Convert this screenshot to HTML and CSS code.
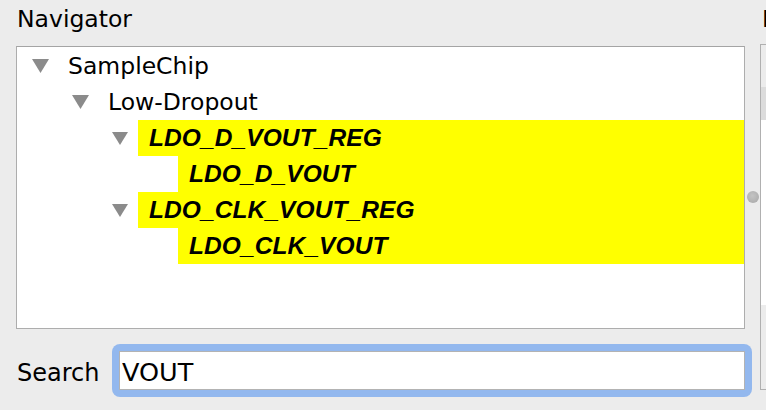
FILE: index.html
```html
<!DOCTYPE html>
<html>
<head>
<meta charset="utf-8">
<title>Navigator</title>
<link rel="stylesheet" href="styles.css">
</head>
<body>
<div class="app">
  <div class="left">
    <div class="title">Navigator</div>
    <div class="tree">
      <div class="row lvl0">
        <span class="tw"><svg width="17" height="14" viewBox="0 0 17 14"><polygon points="0,0 17,0 8.5,14" fill="#8b8b8b"/></svg></span>
        <span class="label">SampleChip</span>
      </div>
      <div class="row lvl1">
        <span class="tw"><svg width="17" height="14" viewBox="0 0 17 14"><polygon points="0,0 17,0 8.5,14" fill="#8b8b8b"/></svg></span>
        <span class="label">Low-Dropout</span>
      </div>
      <div class="row lvl2">
        <span class="tw"><svg width="16" height="13" viewBox="0 0 16 13"><polygon points="0,0 16,0 8,13" fill="#8b8b8b"/></svg></span>
        <span class="label hit">LDO_D_VOUT_REG</span>
      </div>
      <div class="row lvl3">
        <span class="tw"></span>
        <span class="label hit">LDO_D_VOUT</span>
      </div>
      <div class="row lvl2">
        <span class="tw"><svg width="16" height="13" viewBox="0 0 16 13"><polygon points="0,0 16,0 8,13" fill="#8b8b8b"/></svg></span>
        <span class="label hit">LDO_CLK_VOUT_REG</span>
      </div>
      <div class="row lvl3">
        <span class="tw"></span>
        <span class="label hit">LDO_CLK_VOUT</span>
      </div>
    </div>
    <div class="search">
      <label class="search-label" for="q">Search</label>
      <div class="focus-ring">
        <input id="q" class="search-input" type="text" value="VOUT">
      </div>
    </div>
  </div>
  <div class="splitter"><span class="knob"></span></div>
  <div class="right">
    <div class="title rtitle">Details</div>
    <div class="panel">
      <div class="panel-top"></div>
      <div class="panel-head"></div>
      <div class="panel-body"></div>
      <div class="panel-foot"></div>
    </div>
  </div>
</div>
</body>
</html>
```

FILE: styles.css
```css
html, body {
  margin: 0;
  padding: 0;
  background: #ececec;
  overflow: hidden;
  width: 766px;
  height: 410px;
}

.app {
  display: flex;
  align-items: flex-start;
  padding-left: 16px;
  height: 410px;
  font-family: "DejaVu Sans", sans-serif;
  color: #000;
}

.left {
  width: 729px;
  flex: none;
  display: flex;
  flex-direction: column;
}

.title {
  height: 46px;
  box-sizing: border-box;
  padding: 5px 0 0 1px;
  font-size: 23.5px;
  line-height: 28px;
  white-space: nowrap;
}

.tree {
  height: 283px;
  box-sizing: border-box;
  border: 1px solid #adadad;
  border-top-color: #a4a4a4;
  background: #fff;
  padding-top: 1px;
}

.row {
  display: flex;
  align-items: stretch;
  height: 36px;
}

.lvl0 { padding-left: 15px; }
.lvl1 { padding-left: 55px; }
.lvl2 { padding-left: 95px; }
.lvl3 { padding-left: 135px; }

.tw {
  width: 26px;
  flex: none;
  display: flex;
  align-items: center;
}

.tw svg { display: block; }

.label {
  padding-left: 10px;
  font-size: 23.5px;
  line-height: 36px;
  white-space: nowrap;
}

.label.hit {
  flex: 1;
  background: #ffff00;
  padding-left: 11px;
  font-family: "Liberation Sans", Arial, sans-serif;
  font-weight: bold;
  font-style: italic;
  font-size: 24.5px;
  letter-spacing: 0.1px;
}

.search {
  display: flex;
  align-items: flex-start;
  margin-top: 15px;
}

.search-label {
  width: 96px;
  flex: none;
  box-sizing: border-box;
  padding: 15px 0 0 1px;
  font-size: 24px;
  line-height: 28px;
}

.focus-ring {
  width: 640px;
  flex: none;
  box-sizing: border-box;
  padding: 7px;
  background: #93b8ee;
  border-radius: 8px;
}

.search-input {
  display: block;
  width: 100%;
  height: 39px;
  box-sizing: border-box;
  margin: 0;
  border: 1px solid #b3b3b3;
  border-radius: 0;
  background: #fff;
  padding: 3px 0 0 2px;
  font-family: "DejaVu Sans", sans-serif;
  font-size: 25.5px;
  color: #000;
  outline: none;
}

.splitter {
  width: 15px;
  flex: none;
  display: flex;
  justify-content: center;
  padding-top: 191px;
}

.knob {
  width: 12px;
  height: 12px;
  border-radius: 50%;
  background: radial-gradient(circle at 45% 40%, #c4c4c4, #b0b0b0 70%, #a0a0a0);
  margin-left: 1px;
}

.right {
  width: 300px;
  flex: none;
  display: flex;
  flex-direction: column;
}

.rtitle {
  height: 44px;
  padding-left: 2px;
}

.panel {
  height: 346px;
  box-sizing: border-box;
  border: 1px solid #b0b0b0;
  display: flex;
  flex-direction: column;
}

.panel-top { height: 42px; background: #ececec; }
.panel-head { height: 33px; background: #dcdcdc; }
.panel-body { height: 185px; background: #fff; }
.panel-foot { flex: 1; background: #ececec; }
```
